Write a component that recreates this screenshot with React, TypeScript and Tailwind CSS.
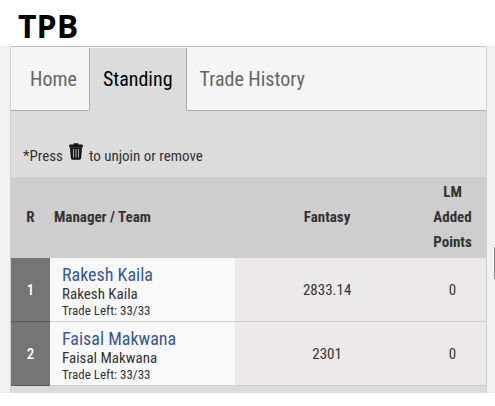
const tabs = ['Home', 'Standing', 'Trade History']

const managers = [
  { rank: 1, manager: 'Rakesh Kaila', team: 'Rakesh Kaila', trades: '33/33', fantasy: '2833.14', added: 0 },
  { rank: 2, manager: 'Faisal Makwana', team: 'Faisal Makwana', trades: '33/33', fantasy: '2301', added: 0 },
]

function TrashIcon() {
  return (
    <svg viewBox="0 0 14 17" className="mx-[6px] mb-px inline-block h-[17px] w-[14px] align-baseline" aria-hidden="true">
      <path d="M4.6 1.5V.3h4.8v1.2h3.4q.8 0 .9.8l.3 1.9H0l.3-1.9q.1-.8.9-.8z" fill="#151515" />
      <path d="M.9 4.2h12.2l-1 10.9c-.1 1-.7 1.6-1.6 1.6h-7c-.9 0-1.5-.6-1.6-1.6z" fill="#151515" />
      <path d="M4.5 6v8.4M7 6v8.4M9.5 6v8.4" stroke="#aaa" strokeWidth="1.1" />
    </svg>
  )
}

function TabBar({ active }: { active: string }) {
  return (
    <nav aria-label="League" className="flex h-[65px] border-t border-[#c2c2c2] bg-[#f5f5f5] pt-px">
      {tabs.map((tab) => (
        <a
          key={tab}
          href="#"
          aria-current={tab === active ? 'page' : undefined}
          className={`flex items-center border-b px-[13px] text-[20px] ${
            tab === active
              ? 'border-x border-x-[#aaa] border-b-[#dcdcdc] bg-[#dcdcdc] text-black'
              : 'border-[#aaa] text-[#666] first:pr-3 first:pl-[19px]'
          }`}
        >
          {tab}
        </a>
      ))}
      <div className="grow border-b border-[#aaa]" />
    </nav>
  )
}

function StandingTable() {
  return (
    <table className="w-full table-fixed border-separate border-spacing-0 text-center text-[15px] text-[#333]">
      <thead className="bg-[#cecece] leading-[25px]">
        <tr className="h-[81px]">
          <th className="w-[39px]">R</th>
          <th className="w-[39%] pl-1 text-left">Manager / Team</th>
          <th>Fantasy</th>
          <th className="w-[67px] px-3">LM Added Points</th>
        </tr>
      </thead>
      <tbody>
        {managers.map((m) => (
          <tr key={m.rank} className="h-16 bg-[#eae8e8]">
            <td className="border-b border-[#5c5c5c] bg-[#757575] pt-[2px] font-medium text-white">{m.rank}</td>
            <td className="border-b border-[#cfcfcf] bg-[#f8f8f8] pt-1 pl-3 text-left">
              <a href="#" className="block text-[18px] leading-[22px] text-[#36589b]">{m.manager}</a>
              <div className="leading-4">{m.team}</div>
              <div className="text-[13px] leading-[18px]">Trade Left: {m.trades}</div>
            </td>
            <td className="border-b border-[#cfcfcf] pt-[2px]">{m.fantasy}</td>
            <td className="border-b border-[#cfcfcf] pt-[2px]">{m.added}</td>
          </tr>
        ))}
      </tbody>
    </table>
  )
}

export default function App() {
  return (
    <div className="min-h-screen bg-white font-['Roboto_Condensed','Liberation_Sans_Narrow',Roboto,sans-serif]">
      <h1 className="px-[18px] pt-[6px] font-['Open_Sans',sans-serif] text-[32px] leading-10 font-bold text-black">
        TPB
      </h1>
      <div className="relative bg-[#f1f1f1] pr-2 pl-[10px]">
        <main className="border-x border-[#d0d0d0] bg-[#dcdcdc] pb-[7px]">
          <TabBar active="Standing" />
          <p className="flex h-[66px] items-end px-3 pb-2 text-[15px] leading-[26px] text-[#333]">
            <span>
              *Press
              <TrashIcon />
              to unjoin or remove
            </span>
          </p>
          <StandingTable />
        </main>
        {/* page scrollbar thumb */}
        <div className="absolute top-[201px] right-0 h-8 w-px bg-[#8c8c8c]" />
      </div>
    </div>
  )
}
